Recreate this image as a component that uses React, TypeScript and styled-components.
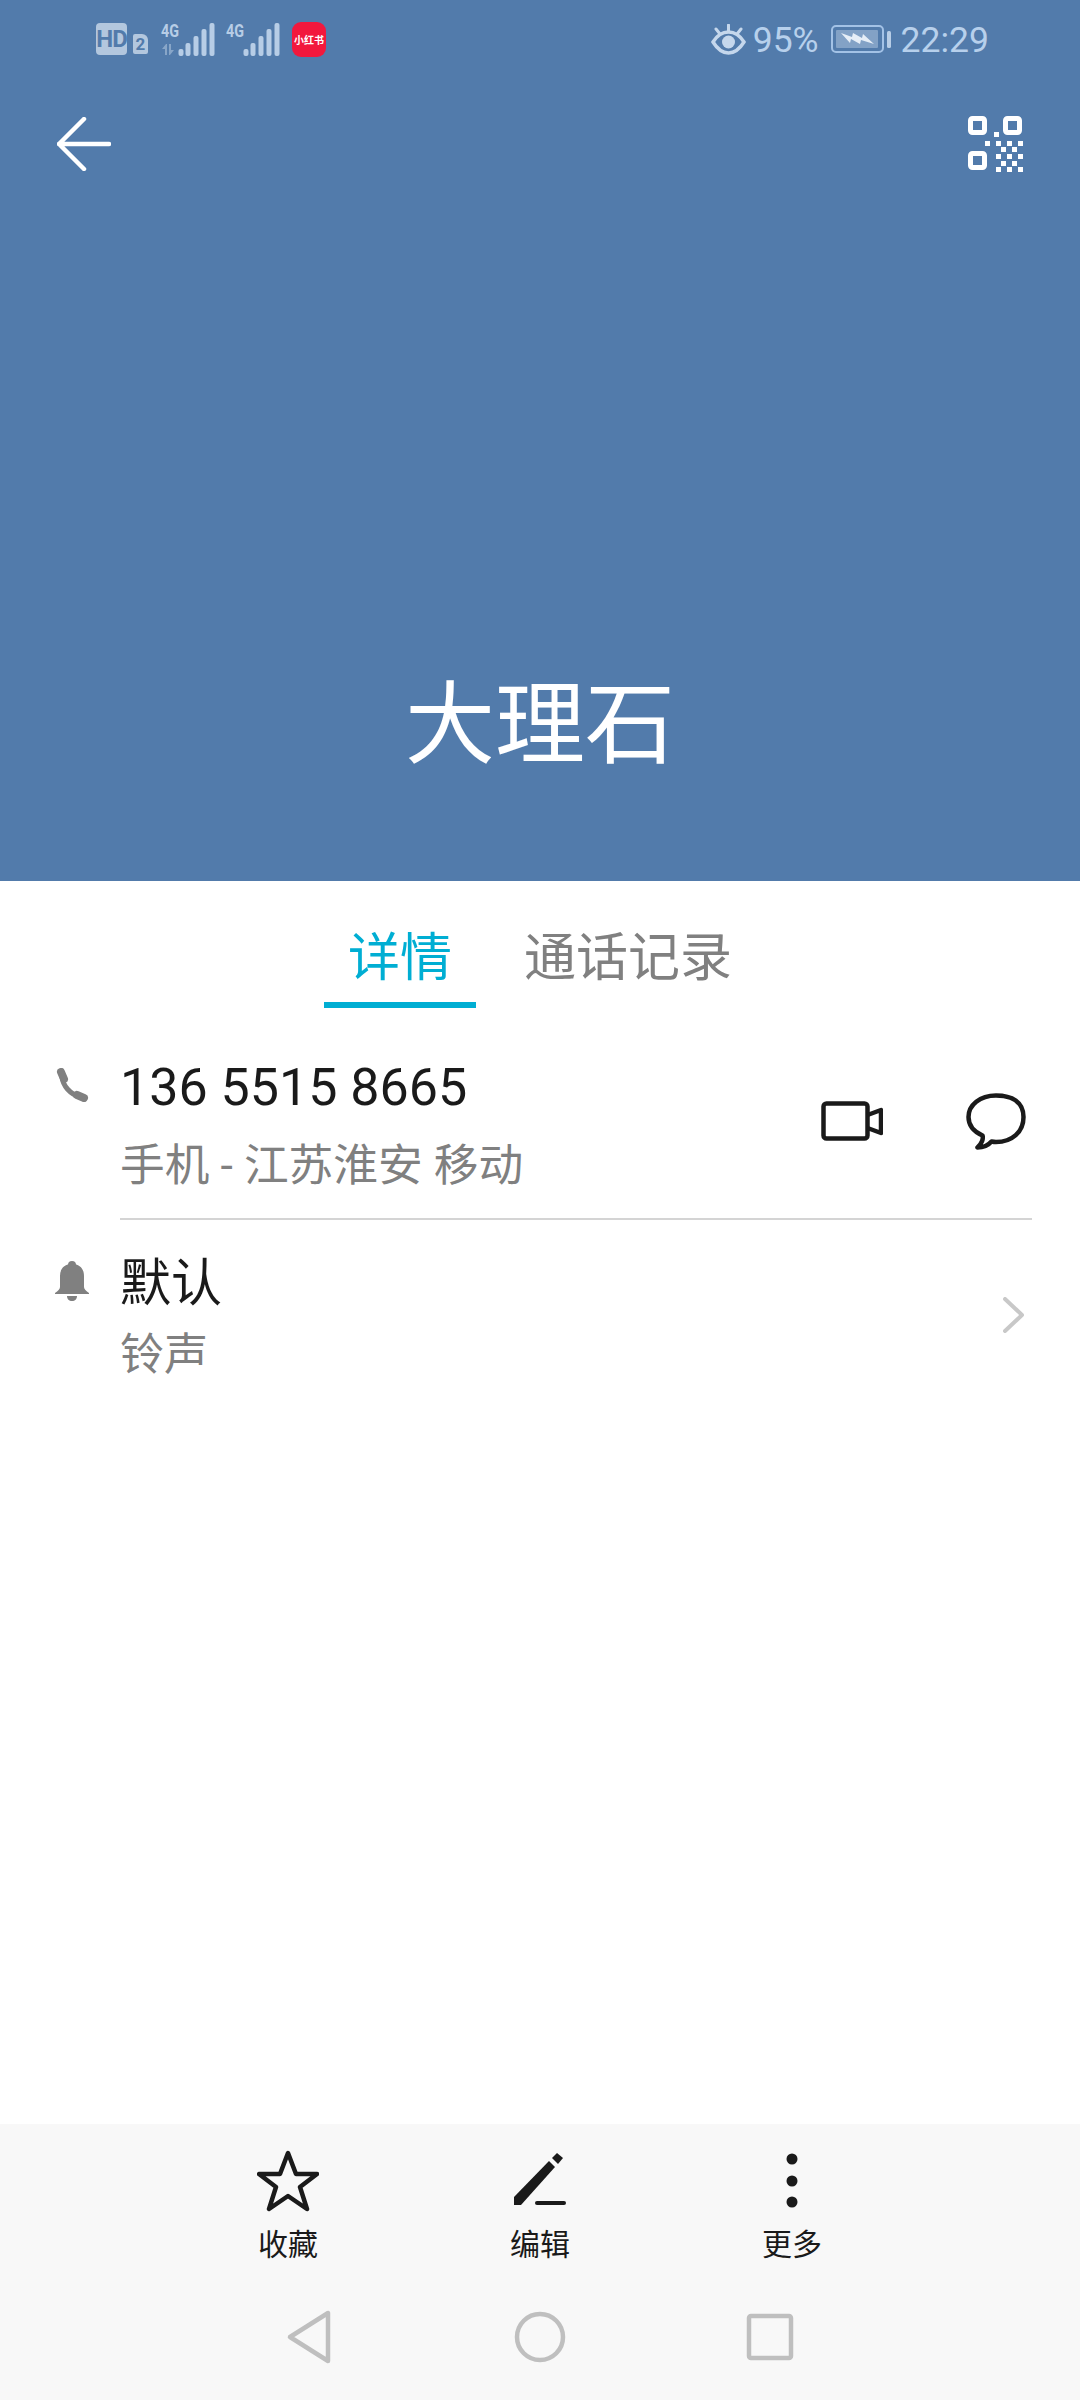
import styled, { createGlobalStyle } from "styled-components";

const GlobalStyle = createGlobalStyle`
  html, body {
    margin: 0;
    padding: 0;
    background: #ffffff;
  }
  body {
    font-family: Roboto, "Noto Sans CJK SC", sans-serif;
  }
`;

const Page = styled.div`
  width: 1080px;
  height: 2400px;
  display: flex;
  flex-direction: column;
  overflow: hidden;
`;

const Hero = styled.header`
  height: 881px;
  background: #527bab;
  display: flex;
  flex-direction: column;
`;

const StatusBar = styled.div`
  height: 78px;
  padding: 0 91px 0 96px;
  display: flex;
  align-items: center;
  justify-content: space-between;
`;

const StatusGroup = styled.div`
  display: flex;
  align-items: center;
`;

const HdBadge = styled.span`
  width: 31px;
  height: 32px;
  margin-right: 6px;
  border-radius: 4px;
  background: #b3c7de;
  color: #527bab;
  font: 700 24px/32px "Roboto", sans-serif;
  letter-spacing: -1px;
  text-align: center;
`;

const SimBadge = styled.span`
  width: 15px;
  height: 20px;
  margin: 10px 13px 0 0;
  border-radius: 2px 6px 2px 2px;
  background: #b3c7de;
  color: #527bab;
  font: 700 17px/20px "Roboto", sans-serif;
  text-align: center;
`;

const SignalSvg = styled.svg<{ $gap: number }>`
  display: block;
  margin-top: -4px;
  margin-right: ${(p) => p.$gap}px;
`;

const AppBadge = styled.span`
  width: 34px;
  height: 35px;
  border-radius: 9px;
  background: #f2183d;
  color: #ffffff;
  font: 700 10px/35px "Noto Sans CJK SC", sans-serif;
  text-align: center;
  white-space: nowrap;
`;

const StatusText = styled.span`
  margin-top: 2px;
  color: #b7d0ec;
  font: 400 35.5px/40px Roboto, sans-serif;
`;

const EyeSvg = styled.svg`
  display: block;
  margin-right: 7px;
`;

const BatterySvg = styled.svg`
  display: block;
  margin: 0 10px 0 12px;
`;

const TopBar = styled.div`
  height: 132px;
  padding: 0 57px;
  display: flex;
  align-items: center;
  justify-content: space-between;
`;

const ContactName = styled.h1`
  margin: auto 0 0;
  padding-bottom: 104px;
  color: #ffffff;
  font: 400 90px/120px "Noto Sans CJK SC", sans-serif;
  text-align: center;
`;

const Tabs = styled.nav`
  height: 127px;
  display: flex;
  justify-content: center;
  gap: 24px;
`;

const Tab = styled.div<{ $active?: boolean }>`
  padding: 0 24px;
  height: 127px;
  box-sizing: border-box;
  border-bottom: 6px solid ${(p) => (p.$active ? "#00aed3" : "transparent")};
  color: ${(p) => (p.$active ? "#00aed3" : "#808080")};
  font: 400 52px/146px "Noto Sans CJK SC", sans-serif;
`;

const Content = styled.main`
  flex: 1;
`;

const Row = styled.section`
  display: flex;
  padding-right: 48px;
`;

const LeadIcon = styled.div<{ $top: number }>`
  width: 120px;
  flex: none;
  padding: ${(p) => p.$top}px 0 0 55px;
  box-sizing: border-box;
`;

const RowBody = styled.div<{ $divider?: boolean; $pad: string }>`
  flex: 1;
  display: flex;
  align-items: center;
  justify-content: space-between;
  padding: ${(p) => p.$pad};
  border-bottom: ${(p) => (p.$divider ? "2px solid #d4d4d4" : "none")};
`;

const TextStack = styled.div<{ $gap: number }>`
  display: flex;
  flex-direction: column;
  gap: ${(p) => p.$gap}px;
`;

const PrimaryText = styled.div<{ $size: number }>`
  color: #1a1a1a;
  font-family: Roboto, "Noto Sans CJK SC", sans-serif;
  font-size: ${(p) => p.$size}px;
  line-height: 60px;
`;

const SecondaryText = styled.div<{ $size: number }>`
  color: #808080;
  font-family: Roboto, "Noto Sans CJK SC", sans-serif;
  font-size: ${(p) => p.$size}px;
  line-height: 60px;
`;

const Actions = styled.div`
  display: flex;
  align-items: center;
  gap: 83px;
  margin: 0 6px 12px 0;
`;

const Chevron = styled.svg`
  display: block;
  margin: 0 8px 10px 0;
`;

const BottomArea = styled.footer`
  height: 276px;
  background: #f8f8f8;
`;

const Toolbar = styled.div`
  display: flex;
  justify-content: center;
  padding-top: 26px;
`;

const ToolItem = styled.div`
  width: 252px;
  display: flex;
  flex-direction: column;
  align-items: center;
`;

const ToolIcon = styled.svg`
  display: block;
  height: 62px;
`;

const ToolLabel = styled.span`
  margin: 10px 0 3px;
  color: #1a1a1a;
  font: 400 30px/40px "Noto Sans CJK SC", sans-serif;
`;

const NavBar = styled.div`
  display: flex;
  justify-content: center;
  gap: 170px;
  padding-top: 42px;
`;

const NavIcon = styled.svg`
  display: block;
  fill: none;
  stroke: #bfbfbf;
  stroke-width: 4.5;
  stroke-linejoin: round;
`;

const statusBars = [
  { x: 20, y: 26 },
  { x: 27, y: 20 },
  { x: 35, y: 13 },
  { x: 43, y: 6 },
  { x: 51, y: 0 },
];

const SignalIcon = ({ arrows, gap }: { arrows?: boolean; gap: number }) => (
  <SignalSvg width="54" height="37" viewBox="0 -4 54 37" $gap={gap}>
    <text x="0" y="14" fontFamily="Roboto" fontWeight="700" fontSize="18" fill="#b7cde6" textLength="18" lengthAdjust="spacingAndGlyphs">
      4G
    </text>
    {arrows && (
      <g fill="#88a6c8">
        <path d="M5 21l-4 5h3v6h2v-11z" />
        <path d="M9 32l4-5h-3v-6H8v11z" />
      </g>
    )}
    {statusBars.map((b) => (
      <rect key={b.x} x={b.x - 2.5} y={b.y} width="5" height={33 - b.y} rx="2" fill="#b7cde6" />
    ))}
  </SignalSvg>
);

const QrCode = () => {
  const dots = [
    [26, 16], [17, 25], [28, 25], [39, 25], [50, 25],
    [33, 31], [44, 31], [28, 38], [39, 38], [50, 38],
    [33, 45], [44, 45], [28, 51], [39, 51], [50, 51],
  ];
  return (
    <svg width="55" height="56" viewBox="0 0 55 56" style={{ display: "block" }}>
      <g fill="none" stroke="#ffffff" strokeWidth="5">
        <rect x="2.5" y="2.5" width="14" height="14" rx="2" />
        <rect x="37.5" y="2.5" width="14" height="14" rx="2" />
        <rect x="2.5" y="37.5" width="14" height="14" rx="2" />
      </g>
      {dots.map(([x, y]) => (
        <rect key={`${x}-${y}`} x={x} y={y} width="5" height="5" fill="#ffffff" />
      ))}
    </svg>
  );
};

export default function App() {
  return (
    <Page>
      <GlobalStyle />
      <Hero>
        <StatusBar>
          <StatusGroup>
            <HdBadge>HD</HdBadge>
            <SimBadge>2</SimBadge>
            <SignalIcon arrows gap={11} />
            <SignalIcon gap={12} />
            <AppBadge>小红书</AppBadge>
          </StatusGroup>
          <StatusGroup>
            <EyeSvg width="35" height="31" viewBox="0 0 35 31" fill="none">
              <path d="M2 18C7 10 12 8 17.5 8S28 10 33 18c-5 8-10 11-15.500 11S7 26 2 18z" stroke="#c5d7ec" strokeWidth="3.500" />
              <circle cx="17.500" cy="18" r="6.500" fill="#c5d7ec" />
              <path d="M17.500 1v6M5 5l4 5M30 5l-4 5" stroke="#c5d7ec" strokeWidth="3" strokeLinecap="round" />
            </EyeSvg>
            <StatusText>95%</StatusText>
            <BatterySvg width="60" height="28" viewBox="0 0 60 28">
              <rect x="1" y="1" width="51" height="26" rx="4" fill="none" stroke="#a3c2e6" strokeWidth="2" />
              <rect x="5" y="5" width="42" height="18" rx="1" fill="#83a2c6" />
              <path d="M10 8l11 4 1-4 9 5 1-4 11 10-13-4-1 4-9-5-1 4z" fill="#e6eef7" />
              <rect x="56" y="6" width="4" height="17" rx="1.500" fill="#b7cde6" />
            </BatterySvg>
            <StatusText>22:29</StatusText>
          </StatusGroup>
        </StatusBar>
        <TopBar>
          <svg width="54" height="54" viewBox="0 0 54 54" fill="none" stroke="#ffffff" strokeWidth="4.5" strokeLinecap="round" strokeLinejoin="round" style={{ display: "block" }}>
            <path d="M52 27H2M27 2L2 27l25 25" />
          </svg>
          <QrCode />
        </TopBar>
        <ContactName>大理石</ContactName>
      </Hero>

      <Tabs>
        <Tab $active>详情</Tab>
        <Tab>通话记录</Tab>
      </Tabs>

      <Content>
        <Row>
          <LeadIcon $top={60}>
            <svg width="34" height="34" viewBox="0 0 34 34" fill="none" stroke="#808080" strokeLinecap="round" style={{ display: "block" }}>
              <path d="M7 9c1 9 8 17 18 20" strokeWidth="5" />
              <path d="M6 4l3 7" strokeWidth="8" />
              <path d="M22 27l7 3" strokeWidth="8" />
            </svg>
          </LeadIcon>
          <RowBody $divider $pad="50px 0 22px">
            <TextStack $gap={18}>
              <PrimaryText $size={52}>136 5515 8665</PrimaryText>
              <SecondaryText $size={44.7}>手机 - 江苏淮安 移动</SecondaryText>
            </TextStack>
            <Actions>
              <svg width="62" height="40" viewBox="0 0 62 40" fill="none" stroke="#1a1a1a" strokeWidth="4.5" strokeLinejoin="round" style={{ display: "block" }}>
                <rect x="2.500" y="2.500" width="44" height="35" rx="3" />
                <path d="M46.500 14L60 9v23l-13.500-5" />
              </svg>
              <svg width="60" height="57" viewBox="0 0 60 57" fill="none" stroke="#1a1a1a" strokeWidth="4.500" strokeLinejoin="round" style={{ display: "block" }}>
                <path d="M30 2.500C14 2.500 2.500 12 2.500 24c0 8 5 14.500 14 18.500 1 3-.5 8-5 12 6 0 11-2.500 14-6 1.500.3 3 .5 4.500.5 16 0 27.500-10 27.500-25S46 2.500 30 2.500z" />
              </svg>
            </Actions>
          </RowBody>
        </Row>
        <Row>
          <LeadIcon $top={41}>
            <svg width="34" height="40" viewBox="0 0 34 40" fill="#808080" style={{ display: "block" }}>
              <circle cx="17" cy="4" r="4" />
              <path d="M17 3C9 3 5 8 5 15v11c0 2-2 4-5 6v1h34v-1c-3-2-5-4-5-6V15c0-7-4-12-12-12z" />
              <path d="M12 35h10c0 3-2 5-5 5s-5-2-5-5z" />
            </svg>
          </LeadIcon>
          <RowBody $pad="34px 0 0">
            <TextStack $gap={11}>
              <PrimaryText $size={51}>默认</PrimaryText>
              <SecondaryText $size={44}>铃声</SecondaryText>
            </TextStack>
            <Chevron width="21" height="36" viewBox="0 0 21 36" fill="none" stroke="#c8c8c8" strokeWidth="4" strokeLinecap="round" strokeLinejoin="round">
              <path d="M2 2l17 16L2 34" />
            </Chevron>
          </RowBody>
        </Row>
      </Content>

      <BottomArea>
        <Toolbar>
          <ToolItem>
            <ToolIcon width="62" height="62" viewBox="0 0 62 62" fill="none" stroke="#1a1a1a" strokeWidth="4.5" strokeLinejoin="round">
              <path d="M31 3l8 21h21L43 37l7 22-19-13-19 13 7-22L2 24h21z" />
            </ToolIcon>
            <ToolLabel>收藏</ToolLabel>
          </ToolItem>
          <ToolItem>
            <ToolIcon width="54" height="62" viewBox="0 0 54 62" fill="#1a1a1a">
              <path d="M1 47L36 11l6 6L8 55H1z" />
              <path d="M39 8l5-5 6 5-5 6z" />
              <rect x="22" y="51" width="31" height="4" rx="2" />
            </ToolIcon>
            <ToolLabel>编辑</ToolLabel>
          </ToolItem>
          <ToolItem>
            <ToolIcon width="12" height="62" viewBox="0 0 12 62" fill="#1a1a1a">
              <circle cx="6" cy="9" r="5.500" />
              <circle cx="6" cy="31" r="5.500" />
              <circle cx="6" cy="52" r="5.500" />
            </ToolIcon>
            <ToolLabel>更多</ToolLabel>
          </ToolItem>
        </Toolbar>
        <NavBar>
          <NavIcon width="60" height="60" viewBox="0 0 60 60">
            <path d="M48 6v48L10 30z" />
          </NavIcon>
          <NavIcon width="60" height="60" viewBox="0 0 60 60">
            <circle cx="30" cy="30" r="23" />
          </NavIcon>
          <NavIcon width="60" height="60" viewBox="0 0 60 60">
            <rect x="9" y="9" width="42" height="42" rx="2" />
          </NavIcon>
        </NavBar>
      </BottomArea>
    </Page>
  );
}
